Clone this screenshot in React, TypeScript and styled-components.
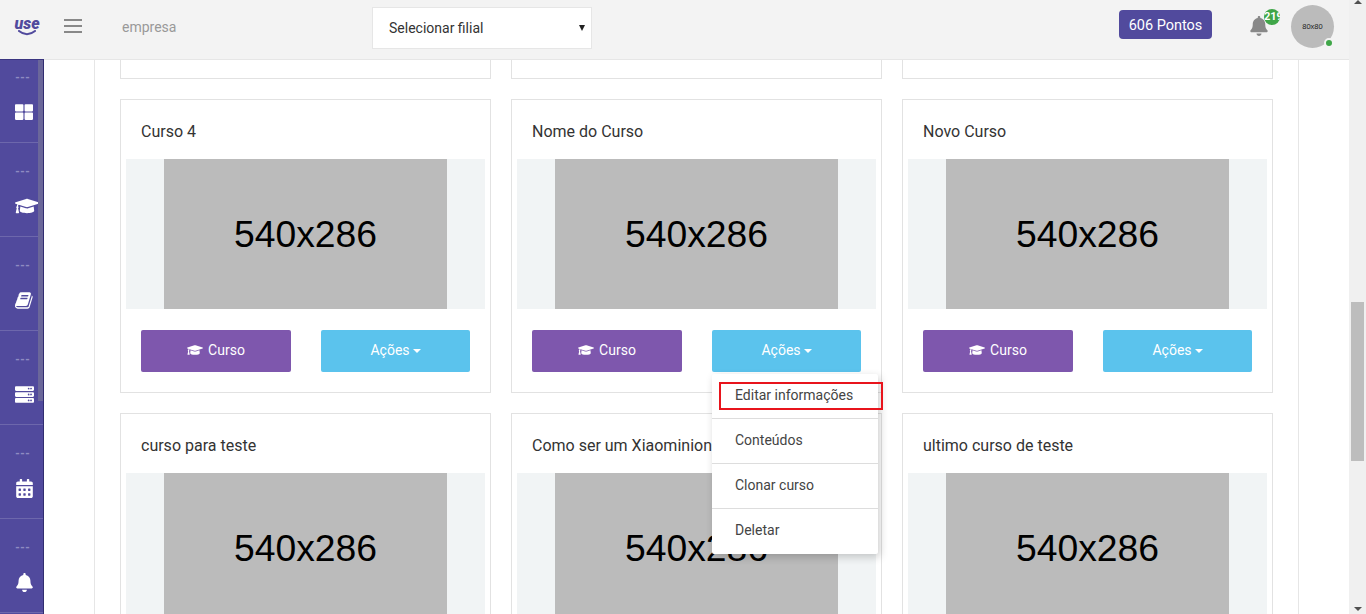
import styled, { createGlobalStyle } from 'styled-components';

// icons
import { FaBell, FaCalendarAlt, FaGraduationCap, FaServer, FaThLarge } from 'react-icons/fa';

const PURPLE = '#514a9d';

const courses = [
  ['Curso 1', 'Curso 2', 'Curso 3'],
  ['Curso 4', 'Nome do Curso', 'Novo Curso'],
  ['curso para teste', 'Como ser um Xiaominion', 'ultimo curso de teste'],
];

const menuItems = ['Editar informações', 'Conteúdos', 'Clonar curso', 'Deletar'];

const GlobalStyle = createGlobalStyle`
  html, body {
    margin: 0;
    height: 100%;
    overflow: hidden;
    background: #fff;
    font-family: Roboto, "Liberation Sans", sans-serif;
  }
`;

const BookIcon = ({ size }: { size: number }) => (
  <svg width={size} height={size} viewBox="0 0 1792 1792" fill="currentColor">
    <path d="M1639 478q40 57 18 129l-275 906q-19 64-76.5 107.5t-122.5 43.5h-923q-77 0-148.5-53.5t-99.5-131.5q-24-67-2-127 0-4 3-27t4-37q1-8-3-21.5t-3-19.5q2-11 8-21t16.5-23.5 16.5-23.5q23-38 45-91.5t30-91.5q3-10 .5-30t-.5-28q3-11 17-28t17-23q21-36 42-92t25-90q1-9-2.5-32t.5-28q4-13 22-30.5t22-22.5q19-26 42.5-84.5t27.5-96.5q1-8-3-25.5t-2-26.5q2-8 9-18t18-23 17-21q8-12 16.5-30.5t15-35 16-36 19.5-32 26.5-23.5 36-11.5 47.5 5.5l-1 3q38-9 51-9h761q74 0 114 56t18 130l-274 906q-36 119-71.5 153.5t-128.5 34.5h-869q-27 0-38 15-11 16-1 43 24 70 144 70h923q29 0 56-15.5t35-41.5l300-987q7-22 5-57 38 15 59 43zm-1064 2q-4 13 2 22.5t20 9.5h608q13 0 25.5-9.5t16.5-22.5l21-64q4-13-2-22.5t-20-9.5h-608q-13 0-25.5 9.5t-16.5 22.5zm-83 256q-4 13 2 22.5t20 9.5h608q13 0 25.5-9.5t16.5-22.5l21-64q4-13-2-22.5t-20-9.5h-608q-13 0-25.5 9.5t-16.5 22.5z" />
  </svg>
);

const navIcons = [
  <FaThLarge size={18} />,
  <FaGraduationCap size={24} />,
  <BookIcon size={19} />,
  <FaServer size={19} />,
  <FaCalendarAlt size={19} />,
  <FaBell size={19} />,
];

const App = () => {
  return (
    <Page>
      <GlobalStyle />
      <Workspace>
        <Topbar>
          <Logo>
            <LogoText>use</LogoText>
            <svg width="20" height="6" viewBox="0 0 20 6">
              <path d="M2 1 Q10 7.5 18 1" fill="none" stroke={PURPLE} strokeWidth="2" strokeLinecap="round" />
            </svg>
          </Logo>
          <Hamburger>
            <span />
            <span />
            <span />
          </Hamburger>
          <CompanyName>empresa</CompanyName>
          <BranchField>
            <BranchSelect defaultValue="">
              <option value="">Selecionar filial</option>
            </BranchSelect>
            <BranchCaret />
          </BranchField>
          <PointsBadge>606 Pontos</PointsBadge>
          <BellWrap>
            <FaBell size={20} color="#888" />
            <BellCount>219</BellCount>
          </BellWrap>
          <Avatar>
            80x80
            <StatusDot />
          </Avatar>
        </Topbar>
        <Body>
          <Sidebar>
            <NavList>
              {navIcons.map((icon, i) => (
                <NavSection key={i}>
                  <NavDots>---</NavDots>
                  <NavIcon>{icon}</NavIcon>
                </NavSection>
              ))}
            </NavList>
            <SidebarThumb />
          </Sidebar>
          <Content>
            <Panel>
              <CourseGrid>
                {courses.flat().map((name) => (
                  <CourseCard key={name}>
                    <CourseTitle>{name}</CourseTitle>
                    <CoverBand>
                      <Cover>540x286</Cover>
                    </CoverBand>
                    <CardActions>
                      <CourseButton>
                        <FaGraduationCap size={16} />
                        Curso
                      </CourseButton>
                      <ActionsWrap>
                        <ActionsButton>
                          Ações
                          <Caret />
                        </ActionsButton>
                        {name === 'Nome do Curso' && (
                          <DropMenu>
                            {menuItems.map((item) => (
                              <DropItem key={item}>{item}</DropItem>
                            ))}
                            <Highlight />
                          </DropMenu>
                        )}
                      </ActionsWrap>
                    </CardActions>
                  </CourseCard>
                ))}
              </CourseGrid>
            </Panel>
          </Content>
        </Body>
      </Workspace>
      <PageScrollbar>
        <ScrollArrow $up />
        <ScrollThumb />
        <ScrollArrow />
      </PageScrollbar>
    </Page>
  );
};

export default App;

const Page = styled.div`
  display: flex;
  height: 100vh;
  overflow: hidden;
`;

const Workspace = styled.div`
  display: flex;
  flex: 1;
  flex-direction: column;
  min-width: 0;
`;

const Topbar = styled.header`
  display: flex;
  flex: none;
  align-items: center;
  box-sizing: border-box;
  height: 60px;
  padding: 0 15px 5px;
  background: #f3f3f3;
  border-bottom: 1px solid #e6e6e6;
`;

const Logo = styled.div`
  display: flex;
  flex-direction: column;
  align-items: center;
  width: 24px;
  margin-top: -4px;

  > svg {
    margin-top: -4px;
  }
`;

const LogoText = styled.span`
  font-size: 16px;
  font-weight: 900;
  font-style: italic;
  line-height: 20px;
  color: ${PURPLE};
`;

const Hamburger = styled.div`
  display: flex;
  flex-direction: column;
  gap: 4px;
  width: 18px;
  margin: -2px 0 0 25px;

  > span {
    height: 2px;
    background: #888;
  }
`;

const CompanyName = styled.span`
  margin-left: 40px;
  width: 250px;
  font-size: 14px;
  color: #999;
`;

const BranchField = styled.div`
  position: relative;
  display: flex;
  margin-top: 2px;
`;

const BranchSelect = styled.select`
  box-sizing: border-box;
  width: 220px;
  height: 42px;
  padding: 0 16px;
  appearance: none;
  background: #fff;
  border: 1px solid #e6e6e6;
  border-radius: 0;
  outline: none;
  font-family: Roboto, sans-serif;
  font-size: 14px;
  color: #333;
`;

const BranchCaret = styled.span`
  position: absolute;
  top: 18px;
  right: 7px;
  width: 0;
  height: 0;
  border-top: 6px solid #222;
  border-left: 3px solid transparent;
  border-right: 3px solid transparent;
`;

const PointsBadge = styled.div`
  box-sizing: border-box;
  width: 93px;
  height: 29px;
  margin: -5px 0 0 auto;
  background: ${PURPLE};
  border-radius: 4px;
  font-size: 14.5px;
  line-height: 31px;
  text-align: center;
  color: #fff;
`;

const BellWrap = styled.div`
  position: relative;
  display: flex;
  width: 20px;
  margin: -2px 0 0 37px;
`;

const BellCount = styled.span`
  position: absolute;
  top: -7px;
  left: 15px;
  width: 16px;
  height: 16px;
  background: #3fa648;
  border-radius: 50%;
  font-size: 11px;
  font-weight: 700;
  line-height: 16px;
  white-space: nowrap;
  overflow: hidden;
  color: #fff;
`;

const Avatar = styled.div`
  position: relative;
  display: flex;
  flex: none;
  align-items: center;
  justify-content: center;
  width: 43px;
  height: 43px;
  margin: -1px 0 0 22px;
  background: #bbb;
  border-radius: 50%;
  font-family: 'Liberation Sans', sans-serif;
  font-size: 7.5px;
  color: #222;
`;

const StatusDot = styled.span`
  position: absolute;
  right: 0;
  bottom: 0;
  box-sizing: border-box;
  width: 10px;
  height: 10px;
  background: #3fa648;
  border: 2px solid #f3f3f3;
  border-radius: 50%;
`;

const Body = styled.div`
  display: flex;
  flex: 1;
  min-height: 0;
`;

const Sidebar = styled.nav`
  position: relative;
  z-index: 2;
  flex: none;
  box-sizing: border-box;
  width: 44px;
  margin-top: -1px;
  overflow: hidden;
  background: ${PURPLE};
  border-top: 1px solid #3a3580;
  border-right: 1px solid #312d70;
`;

const NavList = styled.div`
  margin-top: -11px;
`;

const NavSection = styled.div`
  box-sizing: border-box;
  height: 94px;
  padding: 23px 0 0 15px;
  border-bottom: 1px solid rgba(255, 255, 255, 0.16);
`;

const NavDots = styled.div`
  font-size: 11px;
  font-weight: 900;
  line-height: 12px;
  color: #8f8bc2;
`;

const NavIcon = styled.div`
  display: flex;
  align-items: center;
  height: 24px;
  margin-top: 16px;
  color: #fff;
`;

const SidebarThumb = styled.div`
  position: absolute;
  top: 0;
  right: 0;
  width: 5px;
  height: 341px;
  background: #6b679a;
`;

const Content = styled.main`
  flex: 1;
  min-width: 0;
  padding: 0 50px;
  overflow: hidden;
`;

const Panel = styled.section`
  display: flow-root;
  box-sizing: border-box;
  height: 100%;
  padding: 0 25px;
  border-left: 1px solid #e6e6e6;
  border-right: 1px solid #e6e6e6;
`;

/* scrolled down the page: the first row is cut off by the top bar */
const CourseGrid = styled.div`
  display: grid;
  grid-template-columns: repeat(3, 371px);
  gap: 20px;
  margin-top: -275px;
`;

const CourseCard = styled.article`
  box-sizing: border-box;
  height: 294px;
  padding: 20px 5px 0;
  background: #fff;
  border: 1px solid #e2e2e2;
`;

const CourseTitle = styled.h3`
  margin: 0 0 15px;
  padding: 0 15px;
  font-size: 16px;
  font-weight: 400;
  line-height: 24px;
  white-space: nowrap;
  color: #333;
`;

const CoverBand = styled.div`
  display: flex;
  justify-content: center;
  height: 150px;
  background: #f1f4f5;
`;

const Cover = styled.div`
  width: 283px;
  background: #bbb;
  font-family: 'Liberation Sans', Arial, sans-serif;
  font-size: 37.3px;
  line-height: 151px;
  text-align: center;
  color: #000;
`;

const CardActions = styled.div`
  display: grid;
  grid-template-columns: 150px 149px;
  gap: 30px;
  margin-top: 21px;
  padding: 0 15px;
`;

const CourseButton = styled.button`
  display: flex;
  align-items: center;
  justify-content: center;
  gap: 5px;
  height: 42px;
  padding: 0 0 2px;
  background: #7e57ad;
  border: none;
  border-radius: 2px;
  font-family: Roboto, sans-serif;
  font-size: 14px;
  color: #fff;
`;

const ActionsWrap = styled.div`
  position: relative;
`;

const ActionsButton = styled(CourseButton)`
  gap: 3px;
  width: 100%;
  background: #5bc3ed;
`;

const Caret = styled.span`
  width: 0;
  height: 0;
  margin-top: 2px;
  border-top: 4px solid #fff;
  border-left: 4px solid transparent;
  border-right: 4px solid transparent;
`;

const DropMenu = styled.ul`
  position: absolute;
  top: 44px;
  left: 0;
  z-index: 5;
  width: 166px;
  margin: 0;
  padding: 0;
  list-style: none;
  background: #fff;
  border-radius: 2px;
  box-shadow: 2px 3px 8px rgba(0, 0, 0, 0.2);
`;

const DropItem = styled.li`
  box-sizing: border-box;
  height: 45px;
  padding-left: 23px;
  border-bottom: 1px solid #ddd;
  font-size: 14px;
  line-height: 42px;
  color: #444;

  &:last-of-type {
    border-bottom: none;
  }
`;

/* red annotation drawn over the screenshot */
const Highlight = styled.span`
  position: absolute;
  top: 8px;
  left: 7px;
  box-sizing: border-box;
  width: 164px;
  height: 28px;
  border: 2px solid #e8141c;
`;

const PageScrollbar = styled.div`
  display: flex;
  flex: none;
  flex-direction: column;
  align-items: center;
  width: 17px;
  background: #f0f0f0;
`;

const ScrollArrow = styled.span<{ $up?: boolean }>`
  width: 0;
  height: 0;
  margin: ${(p) => (p.$up ? '0 0 298px' : 'auto 0 3px')};
  border-left: 4px solid transparent;
  border-right: 4px solid transparent;
  ${(p) => (p.$up ? 'border-bottom: 4px solid #505050;' : 'border-top: 4px solid #505050;')}
`;

const ScrollThumb = styled.div`
  width: 13px;
  height: 159px;
  background: #bdbdbd;
`;
